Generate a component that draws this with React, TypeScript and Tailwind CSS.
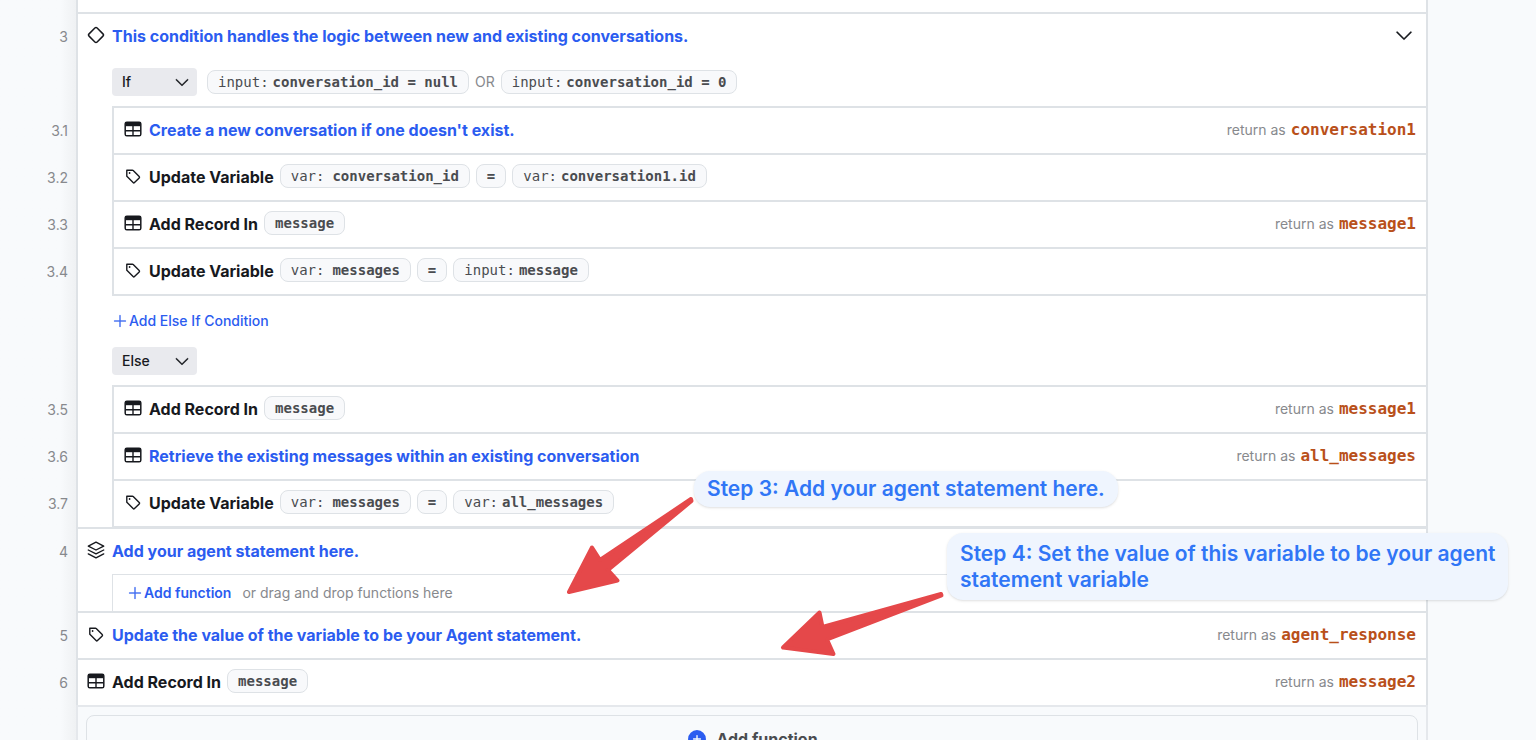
import React, { ReactNode } from 'react'
import { PiCaretDown, PiPlus, PiPlusCircleFill } from 'react-icons/pi'

interface ChipProps {
  prefix?: string
  spaced?: boolean
  children: ReactNode
}

interface LineProps {
  number?: string
  nested?: boolean
  icon?: ReactNode
  returnAs?: string
  action?: ReactNode
  children: ReactNode
}

const TableIcon = () => (
  <svg viewBox="0 0 18 18" className="size-[18px]" fill="none" stroke="currentColor">
    <rect x="1.2" y="2.2" width="15.6" height="13.6" rx="1.6" strokeWidth="1.5" />
    <path d="M1.5 4.5h15" strokeWidth="3.4" />
    <path d="M1.5 10.7h15M9 6v9.6" strokeWidth="1.4" />
  </svg>
)

const TagIcon = () => (
  <svg
    viewBox="0 0 18 18"
    className="size-[18px]"
    fill="none"
    stroke="currentColor"
    strokeWidth="1.4"
    strokeLinejoin="round"
  >
    <path d="M2.800 3.200h5.700a1 1 0 0 1 .7.3l6 6a1 1 0 0 1 0 1.400l-4.700 4.700a1 1 0 0 1-1.400 0l-6-6a1 1 0 0 1-.3-.7z" />
    <circle cx="5.6" cy="6" r="0.9" fill="currentColor" stroke="none" />
  </svg>
)

const DiamondIcon = () => (
  <svg viewBox="0 0 18 18" className="size-[18px]" fill="none" stroke="currentColor">
    <rect x="3.3" y="3.3" width="11.4" height="11.4" rx="1.6" strokeWidth="1.5" transform="rotate(45 9 9)" />
  </svg>
)

const StackIcon = () => (
  <svg
    viewBox="0 0 18 18"
    className="size-[18px]"
    fill="none"
    stroke="currentColor"
    strokeWidth="1.4"
    strokeLinecap="round"
    strokeLinejoin="round"
  >
    <path d="M9 1.200l7.700 3.900L9 9 1.300 5.100z" />
    <path d="M1.300 9L9 12.900 16.700 9" />
    <path d="M1.300 12.900L9 16.800l7.700-3.900" />
  </svg>
)

const Chip = ({ prefix, spaced, children }: ChipProps) => (
  <code
    data-spaced={spaced}
    className="
      flex
      h-6
      items-center
      gap-1
      rounded-lg
      border
      border-[#dee2e6]
      bg-[#f8f9fb]
      px-[10px]
      font-['DejaVu_Sans_Mono',monospace]
      text-sm
      text-[#4a4c50]
      data-[spaced=true]:gap-2
    "
  >
    {prefix && <span>{prefix}</span>}
    <b className="whitespace-pre">{children}</b>
  </code>
)

const Gutter = ({ children }: { children?: ReactNode }) => (
  <div
    className="
      flex
      w-[76px]
      shrink-0
      items-center
      justify-end
      bg-linear-to-r
      from-[#f8fafc]
      from-80%
      to-[#eff1f3]
      pr-2
      text-sm
      text-[#87898d]
    "
  >
    {children && <span className="pt-0.5">{children}</span>}
  </div>
)

// one numbered line: the number sits in the gutter, the rest in the panel
const Line = ({ number, nested, icon, returnAs, action, children }: LineProps) => (
  <div className="flex">
    <Gutter>{number}</Gutter>
    <div
      data-nested={nested}
      className="flex flex-1 border-x-2 border-[#dee2e6] bg-white data-[nested=true]:pl-[34px]"
    >
      <div
        data-nested={nested}
        className="
          flex
          h-[47px]
          flex-1
          items-center
          border-t-2
          border-[#dee2e6]
          pb-[3px]
          pl-[9px]
          pr-[10px]
          data-[nested=true]:border-l-2
          data-[nested=true]:pl-[10px]
        "
      >
        <span className="mr-[7px]">{icon}</span>
        <div className="flex items-center gap-[6px]">{children}</div>
        {returnAs && (
          <div className="ml-auto flex items-center gap-[5px] pt-px text-sm text-[#87898d]">
            return as
            <b className="font-['DejaVu_Sans_Mono',monospace] text-base text-[#b9501a]">
              {returnAs}
            </b>
          </div>
        )}
        {action}
      </div>
    </div>
  </div>
)

const Plain = ({ children }: { children: ReactNode }) => (
  <div className="flex">
    <Gutter />
    <div className="flex-1 border-x-2 border-[#dee2e6] bg-white">{children}</div>
  </div>
)

const Comment = ({ children }: { children: ReactNode }) => (
  <h3 className="pt-px text-base font-bold text-[#2b5cf0]">{children}</h3>
)

const Title = ({ children }: { children: ReactNode }) => (
  <h3 className="pt-px text-base font-bold">{children}</h3>
)

const Branch = ({ label }: { label: string }) => (
  <label className="relative block w-fit">
    <select
      aria-label="Branch"
      defaultValue={label}
      className="block h-7 w-[85px] appearance-none rounded bg-[#e9eaee] pl-[10px] text-sm font-medium"
    >
      <option>If</option>
      <option>Else</option>
    </select>
    <PiCaretDown className="pointer-events-none absolute right-1.5 top-[5px] size-[18px] stroke-4" />
  </label>
)

const App = () => {
  return (
    <main className="relative h-screen overflow-hidden bg-[#f8fafc] font-[Inter,sans-serif] text-[#17191e]">
      <div className="pr-[108px]">
        <Plain>
          <div className="h-3" />
        </Plain>

        <Line
          number="3"
          icon={<DiamondIcon />}
          action={
            <button aria-label="Collapse" className="ml-auto mr-px">
              <PiCaretDown className="size-[22px] stroke-4" />
            </button>
          }
        >
          <Comment>This condition handles the logic between new and existing conversations.</Comment>
        </Line>
        <Plain>
          <div className="flex h-[47px] items-center pb-0.5 pl-[34px]">
            <Branch label="If" />
            <div className="ml-[10px] flex items-center gap-[6px] text-sm text-[#87898d]">
              <Chip prefix="input:">conversation_id = null</Chip>
              OR
              <Chip prefix="input:">conversation_id = 0</Chip>
            </div>
          </div>
        </Plain>

        <Line nested number="3.1" icon={<TableIcon />} returnAs="conversation1">
          <Comment>Create a new conversation if one doesn't exist.</Comment>
        </Line>
        <Line nested number="3.2" icon={<TagIcon />}>
          <Title>Update Variable</Title>
          <Chip prefix="var:" spaced>conversation_id</Chip>
          <Chip>=</Chip>
          <Chip prefix="var:">conversation1.id</Chip>
        </Line>
        <Line nested number="3.3" icon={<TableIcon />} returnAs="message1">
          <Title>Add Record In</Title>
          <Chip>message</Chip>
        </Line>
        <Line nested number="3.4" icon={<TagIcon />}>
          <Title>Update Variable</Title>
          <Chip prefix="var:" spaced>messages</Chip>
          <Chip>=</Chip>
          <Chip prefix="input:">message</Chip>
        </Line>

        <Plain>
          <div className="pl-[34px]">
            <div className="border-t-2 border-[#dee2e6]" />
            <button className="flex h-[51px] items-center gap-px pb-0.5 text-sm font-medium text-[#2b5cf0]">
              <PiPlus className="size-4 stroke-4" />
              Add Else If Condition
            </button>
            <div className="pb-[10px]">
              <Branch label="Else" />
            </div>
          </div>
        </Plain>

        <Line nested number="3.5" icon={<TableIcon />} returnAs="message1">
          <Title>Add Record In</Title>
          <Chip>message</Chip>
        </Line>
        <Line nested number="3.6" icon={<TableIcon />} returnAs="all_messages">
          <Comment>Retrieve the existing messages within an existing conversation</Comment>
        </Line>
        <Line nested number="3.7" icon={<TagIcon />}>
          <Title>Update Variable</Title>
          <Chip prefix="var:" spaced>messages</Chip>
          <Chip>=</Chip>
          <Chip prefix="var:">all_messages</Chip>
        </Line>
        <Plain>
          <div className="ml-[34px] border-t border-[#dee2e6]" />
        </Plain>

        <Line number="4" icon={<StackIcon />}>
          <Comment>Add your agent statement here.</Comment>
        </Line>
        <Plain>
          <div className="ml-[34px] flex h-[37px] items-center border-l border-t border-[#dee2e6] pl-[14px] text-sm text-[#87898d]">
            <button className="mr-[11px] flex items-center gap-px font-semibold text-[#2b5cf0]">
              <PiPlus className="size-4 stroke-4" />
              Add function
            </button>
            or drag and drop functions here
          </div>
        </Plain>

        <Line number="5" icon={<TagIcon />} returnAs="agent_response">
          <Comment>Update the value of the variable to be your Agent statement.</Comment>
        </Line>
        <Line number="6" icon={<TableIcon />} returnAs="message2">
          <Title>Add Record In</Title>
          <Chip>message</Chip>
        </Line>

        <div className="flex">
          <Gutter />
          <div className="flex-1 border-x-2 border-t-2 border-[#e5e8ec] px-2 pt-2">
            <button className="flex h-12 w-full items-center justify-center gap-2 rounded-lg border border-[#dee2e6] text-base font-bold text-[#4a4c50]">
              <PiPlusCircleFill className="size-[22px] text-[#2b5cf0]" />
              Add function
            </button>
          </div>
        </div>
      </div>

      <p className="absolute left-[694px] top-[471px] rounded-2xl bg-[#eff5fe] px-[13px] py-[5px] text-[21px] font-semibold leading-[26px] text-[#3076f6] shadow">
        Step 3: Add your agent statement here.
      </p>
      <p className="absolute left-[947px] top-[533px] w-[561px] rounded-2xl bg-[#eff5fe] pb-[7px] pl-[13px] pr-2 pt-2 text-[21px] font-semibold leading-[26px] text-[#3076f6] shadow">
        Step 4: Set the value of this variable to be your agent statement variable
      </p>

      <svg
        viewBox="566 496 128 100"
        className="absolute left-[566px] top-[496px] h-[100px] w-[128px] fill-[#e5484a] stroke-[#e5484a]"
        strokeWidth="4"
        strokeLinejoin="round"
      >
        <path d="M691 499L600 560L592 547.500L569 592L617.500 580.500L608 570L691.500 501Z" />
      </svg>
      <svg
        viewBox="779 590 166 68"
        className="absolute left-[779px] top-[590px] h-[68px] w-[166px] fill-[#e5484a] stroke-[#e5484a]"
        strokeWidth="4"
        strokeLinejoin="round"
      >
        <path d="M941 594L822.500 627L819.500 612.500L783 647.500L833.500 654L827 639.500L941.500 595.500Z" />
      </svg>
    </main>
  )
}

export default App
